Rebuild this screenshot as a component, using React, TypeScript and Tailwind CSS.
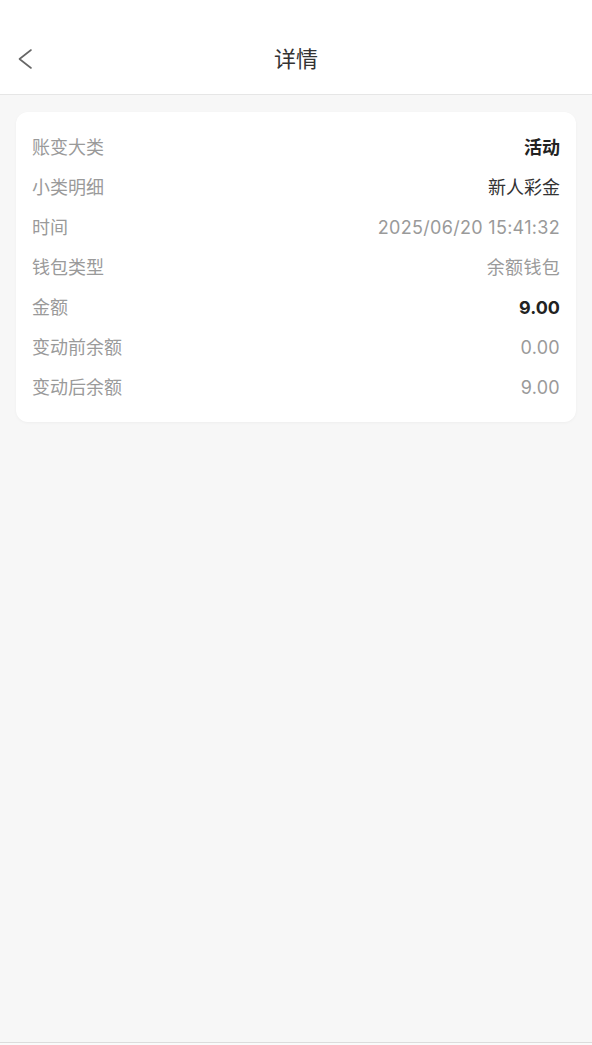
import React from "react";

const rows = [
  { label: "账变大类", value: "活动", tone: "strong" },
  { label: "小类明细", value: "新人彩金", tone: "dark" },
  { label: "时间", value: "2025/06/20 15:41:32", tone: "muted" },
  { label: "钱包类型", value: "余额钱包", tone: "muted" },
  { label: "金额", value: "9.00", tone: "strong" },
  { label: "变动前余额", value: "0.00", tone: "muted" },
  { label: "变动后余额", value: "9.00", tone: "muted" },
];

const toneClass: Record<string, string> = {
  strong: "font-bold text-[#222]",
  dark: "font-normal text-[#333]",
  muted: "text-[#9a9a9a] tracking-[0.3px]",
};

export default function App() {
  return (
    <div
      className="flex h-[1045px] flex-col bg-[#f7f7f7]"
      style={{ fontFamily: 'Inter, "Noto Sans CJK SC", sans-serif' }}
    >
      {/* Header */}
      <header className="border-b border-[#e6e6e6] bg-white pt-6">
        <div className="relative flex h-[70px] items-center justify-center">
          <button className="absolute left-[14px] top-1/2 -translate-y-1/2 p-1 text-[#666]">
            <svg width="16" height="22" viewBox="0 0 16 22" fill="none">
              <path d="M13 2 L1.5 11 L13 20" stroke="currentColor" strokeWidth="1.6" strokeLinecap="round" strokeLinejoin="round" />
            </svg>
          </button>
          <h1 className="text-[22px] font-normal text-[#333]">详情</h1>
        </div>
      </header>

      {/* Content */}
      <main className="flex-1 px-4 pt-[17px]">
        <div className="rounded-xl bg-white px-4 py-[15px] shadow-[0_1px_3px_rgba(0,0,0,0.04)]">
          {rows.map((row) => (
            <div key={row.label} className="flex h-10 items-center justify-between text-[18px]">
              <span className="text-[#9a9a9a]">{row.label}</span>
              <span className={toneClass[row.tone]}>{row.value}</span>
            </div>
          ))}
        </div>
      </main>

      <div className="h-[3px] border-t border-[#dcdcdc] bg-[#fafafa]" />
    </div>
  );
}
